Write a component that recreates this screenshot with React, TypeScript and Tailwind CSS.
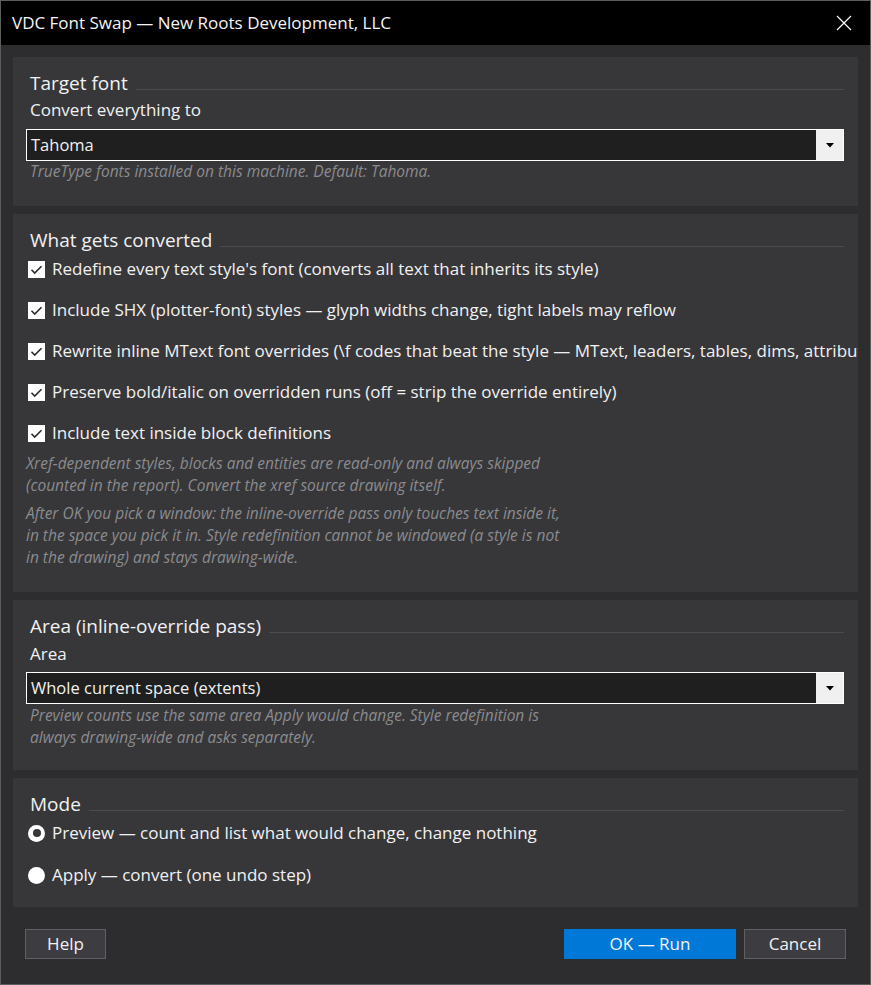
import { ReactNode } from "react";

const FONT = { fontFamily: '"Open Sans", "Noto Sans", sans-serif' };

function SectionHeading({ children }: { children: ReactNode }) {
  return (
    <div className="flex items-center h-[24px] pl-[17px] pr-[14px]">
      <span className="text-[19px] leading-[24px] text-[#f1f1f1] whitespace-nowrap">{children}</span>
      <div className="flex-1 h-px bg-[#4c4c50] ml-[8px] mt-[12px]" />
    </div>
  );
}

function Select({ value }: { value: string }) {
  return (
    <div className="ml-[13px] mr-[14px] h-[32px] flex border border-white bg-[#1f1f1f]">
      <div className="flex-1 flex items-center pl-[4px] text-[16.5px] text-[#f1f1f1] whitespace-nowrap">{value}</div>
      <div className="w-[27px] bg-[#f0f0f0] flex items-center justify-center">
        <svg width="8" height="5" viewBox="0 0 8 5">
          <path d="M0 0h8L4 4.5z" fill="#000" />
        </svg>
      </div>
    </div>
  );
}

function CheckRow({ label }: { label: string }) {
  return (
    <div className="flex items-center h-[30px] pl-[15px] gap-[7px] whitespace-nowrap">
      <div className="w-[17px] h-[17px] shrink-0 bg-white flex items-center justify-center">
        <svg width="13" height="13" viewBox="0 0 13 13">
          <path d="M1.5 6.8l3.2 3.2 6.8-6.8" fill="none" stroke="#2b2b2b" strokeWidth="1.6" />
        </svg>
      </div>
      <span className="text-[17px] text-[#f1f1f1]">{label}</span>
    </div>
  );
}

function RadioRow({ label, selected }: { label: string; selected?: boolean }) {
  return (
    <div className="flex items-center h-[30px] pl-[15px] gap-[7px] whitespace-nowrap">
      <div className="w-[17px] h-[17px] shrink-0 rounded-full bg-white flex items-center justify-center">
        {selected && <div className="w-[8px] h-[8px] rounded-full bg-[#37373a]" />}
      </div>
      <span className="text-[17px] text-[#f1f1f1]">{label}</span>
    </div>
  );
}

function Hint({ lines, className = "" }: { lines: string[]; className?: string }) {
  return (
    <div className={`pl-[17px] text-[15.5px] italic text-[#8b8b8e] whitespace-nowrap ${className}`}>
      {lines.map((line) => (
        <div key={line}>{line}</div>
      ))}
    </div>
  );
}

export default function App() {
  return (
    <div
      className="w-[871px] h-[985px] border border-[#5c5c5c] bg-[#2d2d30] flex flex-col overflow-hidden"
      style={FONT}
    >
      {/* title bar */}
      <div className="h-[44px] shrink-0 bg-black flex items-center pl-[11px] pr-[18px]">
        <span className="flex-1 text-[17px] text-[#f4f4f4]">VDC Font Swap — New Roots Development, LLC</span>
        <svg width="16" height="16" viewBox="0 0 16 16">
          <path d="M1 1l14 14M15 1L1 15" stroke="#fff" strokeWidth="1.2" />
        </svg>
      </div>

      <div className="flex flex-col gap-[8px] px-[12px] pt-[12px]">
        {/* target font */}
        <div className="h-[149px] bg-[#37373a] pt-[14px] overflow-hidden">
          <SectionHeading>Target font</SectionHeading>
          <div className="pl-[17px] mt-[4px] h-[22px] leading-[22px] text-[17px] text-[#f1f1f1]">Convert everything to</div>
          <div className="mt-[8px]">
            <Select value="Tahoma" />
          </div>
          <Hint className="leading-[18px] mt-px" lines={["TrueType fonts installed on this machine. Default: Tahoma."]} />
        </div>

        {/* what gets converted */}
        <div className="h-[378px] bg-[#37373a] pt-[14px] overflow-hidden">
          <SectionHeading>What gets converted</SectionHeading>
          <div className="flex flex-col gap-[11px] mt-[2px]">
            <CheckRow label="Redefine every text style's font (converts all text that inherits its style)" />
            <CheckRow label="Include SHX (plotter-font) styles — glyph widths change, tight labels may reflow" />
            <CheckRow label="Rewrite inline MText font overrides (\f codes that beat the style — MText, leaders, tables, dims, attributes)" />
            <CheckRow label="Preserve bold/italic on overridden runs (off = strip the override entirely)" />
            <CheckRow label="Include text inside block definitions" />
          </div>
          <div className="-ml-[4px]">
            <Hint
              className="leading-[22px] mt-[4px]"
              lines={[
                "Xref-dependent styles, blocks and entities are read-only and always skipped",
                "(counted in the report). Convert the xref source drawing itself.",
              ]}
            />
            <Hint
              className="leading-[22px] mt-[6px]"
              lines={[
                "After OK you pick a window: the inline-override pass only touches text inside it,",
                "in the space you pick it in. Style redefinition cannot be windowed (a style is not",
                "in the drawing) and stays drawing-wide.",
              ]}
            />
          </div>
        </div>

        {/* area */}
        <div className="h-[170px] bg-[#37373a] pt-[14px] overflow-hidden">
          <SectionHeading>Area (inline-override pass)</SectionHeading>
          <div className="pl-[17px] mt-[5px] h-[22px] leading-[22px] text-[17px] text-[#f1f1f1]">Area</div>
          <div className="mt-[7px]">
            <Select value="Whole current space (extents)" />
          </div>
          <Hint
            className="leading-[22px]"
            lines={[
              "Preview counts use the same area Apply would change. Style redefinition is",
              "always drawing-wide and asks separately.",
            ]}
          />
        </div>

        {/* mode */}
        <div className="h-[129px] bg-[#37373a] pt-[14px] overflow-hidden">
          <SectionHeading>Mode</SectionHeading>
          <div className="flex flex-col gap-[12px] mt-[2px]">
            <RadioRow label="Preview — count and list what would change, change nothing" selected />
            <RadioRow label="Apply — convert (one undo step)" />
          </div>
        </div>
      </div>

      {/* footer buttons */}
      <div className="flex items-center px-[24px] mt-[22px]">
        <button className="w-[81px] h-[30px] bg-[#3c3c41] border border-[#606064] text-[17px] text-[#f1f1f1]">Help</button>
        <div className="flex-1" />
        <button className="w-[172px] h-[30px] bg-[#0078d7] text-[17px] text-[#f4f4f4]">OK — Run</button>
        <button className="w-[102px] h-[30px] ml-[8px] bg-[#3c3c41] border border-[#606064] text-[17px] text-[#f1f1f1]">
          Cancel
        </button>
      </div>
    </div>
  );
}
